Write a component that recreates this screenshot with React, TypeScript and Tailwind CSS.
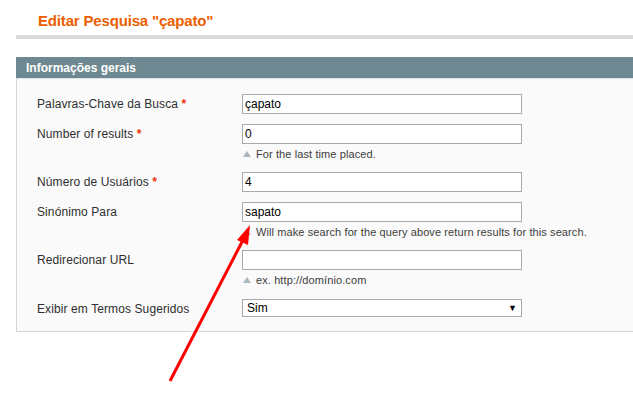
import React from "react";

const font = { fontFamily: '"Liberation Sans", Arial, sans-serif' };

function Hint({ children }: { children: React.ReactNode }) {
  return (
    <div className="flex items-center mt-[3px] text-[11px] leading-[14px] text-[#3d3d3d] tracking-[0.1px]">
      <span className="inline-block w-0 h-0 border-l-[4px] border-r-[4px] border-b-[6px] border-l-transparent border-r-transparent border-b-[#a9b8bf] ml-[1px] mr-[5px]" />
      <span>{children}</span>
    </div>
  );
}

function Row({
  label,
  required,
  value,
  hint,
  select,
  pb,
}: {
  label: string;
  required?: boolean;
  value: string;
  hint?: string;
  select?: boolean;
  pb: string;
}) {
  return (
    <div className={`flex ${pb}`}>
      <div className="w-[205px] pt-[3px] text-[12px] leading-[15px] text-[#2f2f2f] tracking-[0.1px]">
        {label}
        {required && <span className="text-[#eb340a] font-bold"> *</span>}
      </div>
      <div>
        {select ? (
          <div className="w-[280px] h-[18px] border border-[#aaaaaa] bg-white flex items-center justify-between pl-[4px] pr-[4px] text-[12px] text-black">
            <span>{value}</span>
            <span className="text-[9px] leading-none">▼</span>
          </div>
        ) : (
          <div className="w-[280px] h-[20px] border border-[#aaaaaa] bg-white flex items-center px-[2px] text-[12px] text-black">
            {value}
          </div>
        )}
        {hint && <Hint>{hint}</Hint>}
      </div>
    </div>
  );
}

export default function App() {
  return (
    <div className="relative w-[633px] h-[396px] bg-white overflow-hidden" style={font}>
      <div className="pl-[16px]">
        <div className="h-[35px] flex items-end pl-[22px] pb-[6px]">
          <h1 className="text-[15px] leading-[16px] font-bold text-[#eb5e00] tracking-[-0.17px]">
            Editar Pesquisa "çapato"
          </h1>
        </div>
        <div className="h-[4px] bg-[#dadada]" />
        <div className="mt-[18px]">
          <div className="h-[22px] bg-[#6f8992] border-b border-[#dbe3e6] flex items-center pl-[10px] text-[12px] font-bold text-white">
            Informações gerais
          </div>
          <div className="bg-[#fafafa] border-l border-b border-[#d6d6d6] pl-[20px] pt-[15px]">
            <Row label="Palavras-Chave da Busca" required value="çapato" pb="pb-[10px]" />
            <Row
              label="Number of results"
              required
              value="0"
              hint="For the last time placed."
              pb="pb-[11px]"
            />
            <Row label="Número de Usuários" required value="4" pb="pb-[10px]" />
            <Row
              label="Sinónimo Para"
              value="sapato"
              hint="Will make search for the query above return results for this search."
              pb="pb-[11px]"
            />
            <Row label="Redirecionar URL" value="" hint="ex. http://domínio.com" pb="pb-[12px]" />
            <Row label="Exibir em Termos Sugeridos" value="Sim" select pb="pb-[14px]" />
          </div>
        </div>
      </div>
      <svg
        className="absolute left-0 top-0 pointer-events-none"
        width="633"
        height="396"
        viewBox="0 0 633 396"
      >
        <line x1="170" y1="381" x2="243" y2="240" stroke="#ff0000" strokeWidth="3" />
        <polygon points="250,225 237,240 248,245" fill="#ff0000" />
      </svg>
    </div>
  );
}
